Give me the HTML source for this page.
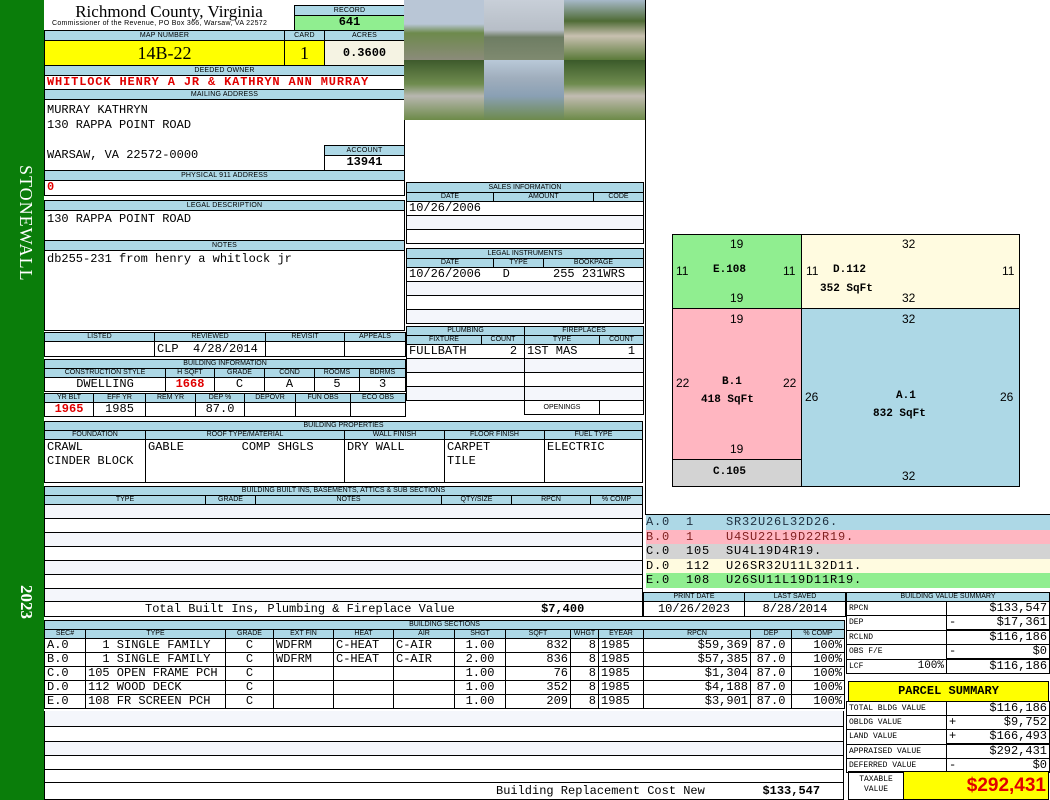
<!DOCTYPE html>
<html><head><meta charset="utf-8"><style>
*{margin:0;padding:0;box-sizing:border-box}
body{width:1050px;height:800px;position:relative;background:#fff;overflow:hidden;font-family:"Liberation Mono",monospace;font-size:12px;color:#000}
.a{position:absolute}
.b{position:absolute;border:1px solid #000}
.h{position:absolute;background:#add8e6;border:1px solid #000;font:7px/9px "Liberation Sans",sans-serif;text-align:center;letter-spacing:0.2px}
.v{position:absolute;border:1px solid #000;font:12px/13px "Liberation Mono",monospace;white-space:nowrap;overflow:hidden;padding:0 2px}
.c{text-align:center}.r{text-align:right}
.red{color:#e00000;font-weight:bold}
table{position:absolute;border-collapse:collapse;table-layout:fixed}
td{border:1px solid #000;padding:0 2px;white-space:nowrap;overflow:hidden;font:12px/13px "Liberation Mono",monospace}
tr.hd td{background:#add8e6;font:7px/8px "Liberation Sans",sans-serif;text-align:center}
tr.alt td{background:#f4f6fb}
.sk{position:absolute;font:12px "Liberation Sans",sans-serif}
.skb{position:absolute;font:bold 11px "Liberation Mono",monospace}
.lb{font-size:8px!important}
</style></head><body>
<div class="a" style="left:0;top:0;width:44px;height:800px;background:#0a7d0a"></div>
<div class="a" style="left:8px;top:165px;width:28px;height:150px;color:#fff;font:18px 'Liberation Serif',serif;writing-mode:vertical-rl;letter-spacing:1px">STONEWALL</div>
<div class="a" style="left:8px;top:585px;width:28px;height:45px;color:#fff;font:bold 17px 'Liberation Serif',serif;writing-mode:vertical-rl">2023</div>

<div class="a" style="left:44px;top:2px;width:250px;text-align:center;font:17px/19px 'Liberation Serif',serif">Richmond County, Virginia</div>
<div class="a" style="left:52px;top:19px;width:240px;font:7px/9px 'Liberation Sans',sans-serif;letter-spacing:0.3px">Commissioner of the Revenue, PO Box 366, Warsaw, VA 22572</div>
<div class="h" style="left:294px;top:5px;width:111px;height:11px">RECORD</div>
<div class="v c" style="left:294px;top:15px;width:111px;height:16px;background:#90ee90;font-weight:bold">641</div>
<div class="h" style="left:44px;top:30px;width:241px;height:11px">MAP NUMBER</div>
<div class="h" style="left:284px;top:30px;width:41px;height:11px">CARD</div>
<div class="h" style="left:324px;top:30px;width:81px;height:11px">ACRES</div>
<div class="b" style="left:44px;top:40px;width:241px;height:26px;background:#ffff00;font:18px/24px 'Liberation Serif',serif;text-align:center">14B-22</div>
<div class="b" style="left:284px;top:40px;width:41px;height:26px;background:#ffff00;font:18px/24px 'Liberation Serif',serif;text-align:center">1</div>
<div class="v c" style="left:324px;top:40px;width:81px;height:26px;background:#f5f3e3;font-weight:bold;line-height:24px">0.3600</div>
<div class="h" style="left:44px;top:65px;width:361px;height:11px">DEEDED OWNER</div>
<div class="v red" style="left:44px;top:75px;width:361px;height:15px;font-size:12px;letter-spacing:0.85px">WHITLOCK HENRY A JR &amp; KATHRYN ANN MURRAY</div>
<div class="h" style="left:44px;top:89px;width:361px;height:11px">MAILING ADDRESS</div>
<div class="b" style="left:44px;top:99px;width:361px;height:72px"></div>
<div class="a" style="left:47px;top:103px;font:12px/15px 'Liberation Mono',monospace">MURRAY KATHRYN<br>130 RAPPA POINT ROAD<br><br>WARSAW, VA 22572-0000</div>
<div class="h" style="left:324px;top:145px;width:81px;height:11px">ACCOUNT</div>
<div class="v c" style="left:324px;top:155px;width:81px;height:16px;font-weight:bold">13941</div>
<div class="h" style="left:44px;top:170px;width:361px;height:11px">PHYSICAL 911 ADDRESS</div>
<div class="v red" style="left:44px;top:180px;width:361px;height:16px">0</div>
<div class="h" style="left:44px;top:200px;width:361px;height:11px">LEGAL DESCRIPTION</div>
<div class="v" style="left:44px;top:210px;width:361px;height:31px;padding-top:2px">130 RAPPA POINT ROAD</div>
<div class="h" style="left:44px;top:240px;width:361px;height:11px">NOTES</div>
<div class="v" style="left:44px;top:250px;width:361px;height:81px;padding-top:2px">db255-231 from henry a whitlock jr</div>

<!-- photos -->
<div class="a" style="left:404px;top:0;width:241px;height:120px;display:grid;grid-template-columns:80px 80px 81px;grid-template-rows:60px 60px">
<div style="background:linear-gradient(#b9c6d6 0,#b9c6d6 40%,#6d8a4c 55%,#8b8b7a 100%)"></div>
<div style="background:linear-gradient(#c8cfd8 0,#b7bec7 50%,#6e7d63 62%,#7f8a70 100%)"></div>
<div style="background:linear-gradient(#a7b9c9 0,#4f6b35 35%,#c8c0b0 60%,#5b7a3a 100%)"></div>
<div style="background:linear-gradient(#3e5a2c 0,#6f8c4f 40%,#b8b7b0 60%,#6c8a48 100%)"></div>
<div style="background:linear-gradient(#b9c9d8 0,#a0aebd 30%,#8aa0b4 60%,#6d8a4c 100%)"></div>
<div style="background:linear-gradient(#3b5a2a 0,#6f8c4f 40%,#c2bcb2 60%,#6c8a48 100%)"></div>
</div>

<!-- sales -->
<table style="left:406px;top:182px;width:237px">
<colgroup><col style="width:87px"><col style="width:100px"><col style="width:50px"></colgroup>
<tr class="hd"><td colspan="3" style="height:10px">SALES INFORMATION</td></tr>
<tr class="hd"><td>DATE</td><td>AMOUNT</td><td>CODE</td></tr>
<tr><td colspan="3" style="height:14px">10/26/2006</td></tr>
<tr class="alt"><td colspan="3" style="height:14px"></td></tr>
<tr><td colspan="3" style="height:14px"></td></tr>
</table>
<table style="left:406px;top:248px;width:237px">
<colgroup><col style="width:87px"><col style="width:50px"><col style="width:100px"></colgroup>
<tr class="hd"><td colspan="3" style="height:10px">LEGAL INSTRUMENTS</td></tr>
<tr class="hd"><td>DATE</td><td>TYPE</td><td>BOOKPAGE</td></tr>
<tr><td colspan="3" style="height:14px">10/26/2006&nbsp;&nbsp;&nbsp;D&nbsp;&nbsp;&nbsp;&nbsp;&nbsp;&nbsp;255 231WRS</td></tr>
<tr class="alt"><td colspan="3" style="height:14px"></td></tr>
<tr><td colspan="3" style="height:14px"></td></tr>
<tr class="alt"><td colspan="3" style="height:14px"></td></tr>
</table>
<table style="left:406px;top:326px;width:237px">
<colgroup><col style="width:75px"><col style="width:43px"><col style="width:75px"><col style="width:44px"></colgroup>
<tr class="hd"><td colspan="2">PLUMBING</td><td colspan="2">FIREPLACES</td></tr>
<tr class="hd"><td>FIXTURE</td><td>COUNT</td><td>TYPE</td><td>COUNT</td></tr>
<tr><td colspan="2" style="height:14px">FULLBATH&nbsp;&nbsp;&nbsp;&nbsp;&nbsp;&nbsp;2</td><td colspan="2">1ST MAS&nbsp;&nbsp;&nbsp;&nbsp;&nbsp;&nbsp;&nbsp;1</td></tr>
<tr class="alt"><td colspan="2" style="height:14px"></td><td colspan="2"></td></tr>
<tr><td colspan="2" style="height:14px"></td><td colspan="2"></td></tr>
<tr class="alt"><td colspan="2" style="height:14px"></td><td colspan="2"></td></tr>
<tr><td colspan="2" style="border:none;border-right:1px solid #000;height:14px"></td><td style="font:7px 'Liberation Sans',sans-serif;text-align:center">OPENINGS</td><td></td></tr>
</table>

<!-- listed -->
<table style="left:44px;top:332px;width:361px">
<colgroup><col style="width:110px"><col style="width:111px"><col style="width:79px"><col style="width:61px"></colgroup>
<tr class="hd"><td>LISTED</td><td>REVIEWED</td><td>REVISIT</td><td>APPEALS</td></tr>
<tr><td style="height:15px"></td><td>CLP&nbsp;&nbsp;4/28/2014</td><td></td><td></td></tr>
</table>
<table style="left:44px;top:359px;width:361px">
<colgroup><col style="width:121px"><col style="width:49px"><col style="width:50px"><col style="width:50px"><col style="width:45px"><col style="width:46px"></colgroup>
<tr class="hd"><td colspan="6">BUILDING INFORMATION</td></tr>
<tr class="hd"><td>CONSTRUCTION STYLE</td><td>H SQFT</td><td>GRADE</td><td>COND</td><td>ROOMS</td><td>BDRMS</td></tr>
<tr style="text-align:center"><td>DWELLING</td><td class="red">1668</td><td>C</td><td>A</td><td>5</td><td>3</td></tr>
</table>
<table style="left:44px;top:393px;width:361px">
<colgroup><col style="width:49px"><col style="width:52px"><col style="width:50px"><col style="width:49px"><col style="width:51px"><col style="width:55px"><col style="width:55px"></colgroup>
<tr class="hd"><td>YR BLT</td><td>EFF YR</td><td>REM YR</td><td>DEP %</td><td>DEPOVR</td><td>FUN OBS</td><td>ECO OBS</td></tr>
<tr style="text-align:center"><td class="red" style="height:14px">1965</td><td>1985</td><td></td><td>87.0</td><td></td><td></td><td></td></tr>
</table>

<!-- building properties -->
<table style="left:44px;top:421px;width:598px">
<colgroup><col style="width:101px"><col style="width:199px"><col style="width:100px"><col style="width:100px"><col style="width:98px"></colgroup>
<tr class="hd"><td colspan="5">BUILDING PROPERTIES</td></tr>
<tr class="hd"><td>FOUNDATION</td><td>ROOF TYPE/MATERIAL</td><td>WALL FINISH</td><td>FLOOR FINISH</td><td>FUEL TYPE</td></tr>
<tr style="vertical-align:top"><td style="height:43px;line-height:14px">CRAWL<br>CINDER BLOCK</td><td style="line-height:14px">GABLE&nbsp;&nbsp;&nbsp;&nbsp;&nbsp;&nbsp;&nbsp;&nbsp;COMP SHGLS</td><td style="line-height:14px">DRY WALL</td><td style="line-height:14px">CARPET<br>TILE</td><td style="line-height:14px">ELECTRIC</td></tr>
</table>

<!-- built ins -->
<table style="left:44px;top:486px;width:598px">
<colgroup><col style="width:161px"><col style="width:50px"><col style="width:186px"><col style="width:70px"><col style="width:79px"><col style="width:52px"></colgroup>
<tr class="hd"><td colspan="6">BUILDING BUILT INS, BASEMENTS, ATTICS &amp; SUB SECTIONS</td></tr>
<tr class="hd"><td>TYPE</td><td>GRADE</td><td>NOTES</td><td>QTY/SIZE</td><td>RPCN</td><td>% COMP</td></tr>
<tr class="alt"><td colspan="6" style="height:14px"></td></tr>
<tr><td colspan="6" style="height:14px"></td></tr>
<tr class="alt"><td colspan="6" style="height:14px"></td></tr>
<tr><td colspan="6" style="height:14px"></td></tr>
<tr class="alt"><td colspan="6" style="height:14px"></td></tr>
<tr><td colspan="6" style="height:14px"></td></tr>
<tr class="alt"><td colspan="6" style="height:13px"></td></tr>
<tr><td colspan="6" style="height:15px;padding-left:100px">Total Built Ins, Plumbing &amp; Fireplace Value&nbsp;&nbsp;&nbsp;&nbsp;&nbsp;&nbsp;&nbsp;&nbsp;&nbsp;&nbsp;&nbsp;&nbsp;<b>$7,400</b></td></tr>
</table>

<!-- building sections -->
<table style="left:44px;top:620px;width:800px">
<colgroup><col style="width:41px"><col style="width:140px"><col style="width:48px"><col style="width:60px"><col style="width:60px"><col style="width:61px"><col style="width:51px"><col style="width:65px"><col style="width:28px"><col style="width:45px"><col style="width:107px"><col style="width:41px"><col style="width:53px"></colgroup>
<tr class="hd"><td colspan="13">BUILDING SECTIONS</td></tr>
<tr class="hd"><td>SEC#</td><td>TYPE</td><td>GRADE</td><td>EXT FIN</td><td>HEAT</td><td>AIR</td><td>SHGT</td><td>SQFT</td><td>WHGT</td><td>EYEAR</td><td>RPCN</td><td>DEP</td><td>% COMP</td></tr>
<tr><td>A.0</td><td>&nbsp;&nbsp;1 SINGLE FAMILY</td><td class="c">C</td><td>WDFRM</td><td>C-HEAT</td><td>C-AIR</td><td class="c">1.00</td><td class="r">832</td><td class="r">8</td><td>1985</td><td class="r">$59,369</td><td class="c">87.0</td><td class="r">100%</td></tr>
<tr><td>B.0</td><td>&nbsp;&nbsp;1 SINGLE FAMILY</td><td class="c">C</td><td>WDFRM</td><td>C-HEAT</td><td>C-AIR</td><td class="c">2.00</td><td class="r">836</td><td class="r">8</td><td>1985</td><td class="r">$57,385</td><td class="c">87.0</td><td class="r">100%</td></tr>
<tr><td>C.0</td><td>105 OPEN FRAME PCH</td><td class="c">C</td><td></td><td></td><td></td><td class="c">1.00</td><td class="r">76</td><td class="r">8</td><td>1985</td><td class="r">$1,304</td><td class="c">87.0</td><td class="r">100%</td></tr>
<tr><td>D.0</td><td>112 WOOD DECK</td><td class="c">C</td><td></td><td></td><td></td><td class="c">1.00</td><td class="r">352</td><td class="r">8</td><td>1985</td><td class="r">$4,188</td><td class="c">87.0</td><td class="r">100%</td></tr>
<tr><td>E.0</td><td>108 FR SCREEN PCH</td><td class="c">C</td><td></td><td></td><td></td><td class="c">1.00</td><td class="r">209</td><td class="r">8</td><td>1985</td><td class="r">$3,901</td><td class="c">87.0</td><td class="r">100%</td></tr>
</table>
<div class="b" style="left:44px;top:711px;width:800px;height:89px;border-top:none"></div>
<div class="a" style="left:45px;top:711px;width:798px;height:16px;border-bottom:1px solid #000;background:#f4f6fb"></div>
<div class="a" style="left:45px;top:727px;width:798px;height:15px;border-bottom:1px solid #000"></div>
<div class="a" style="left:45px;top:742px;width:798px;height:14px;border-bottom:1px solid #000;background:#f4f6fb"></div>
<div class="a" style="left:45px;top:756px;width:798px;height:14px;border-bottom:1px solid #000"></div>
<div class="a" style="left:45px;top:770px;width:798px;height:13px;border-bottom:1px solid #000"></div>
<div class="a" style="left:496px;top:785px;font:12px/13px 'Liberation Mono',monospace;white-space:pre">Building Replacement Cost New        <b>$133,547</b></div>

<!-- sketch -->
<div class="b" style="left:645px;top:0;width:405px;height:515px;border-right:none;border-top:none"></div>
<div class="b" style="left:672px;top:234px;width:130px;height:75px;background:#90ee90"></div>
<div class="b" style="left:801px;top:234px;width:219px;height:75px;background:#fffbe0"></div>
<div class="b" style="left:672px;top:308px;width:130px;height:152px;background:#ffb6c1"></div>
<div class="b" style="left:672px;top:459px;width:130px;height:28px;background:#d3d3d3"></div>
<div class="b" style="left:801px;top:308px;width:219px;height:179px;background:#add8e6"></div>
<div class="sk" style="left:730px;top:237px">19</div><div class="sk" style="left:676px;top:264px">11</div><div class="sk" style="left:783px;top:264px">11</div><div class="skb" style="left:713px;top:264px">E.108</div><div class="sk" style="left:730px;top:291px">19</div>
<div class="sk" style="left:902px;top:237px">32</div><div class="sk" style="left:806px;top:264px">11</div><div class="skb" style="left:833px;top:264px">D.112</div><div class="sk" style="left:1002px;top:264px">11</div><div class="skb" style="left:820px;top:283px">352 SqFt</div><div class="sk" style="left:902px;top:291px">32</div>
<div class="sk" style="left:730px;top:312px">19</div><div class="sk" style="left:676px;top:376px">22</div><div class="skb" style="left:722px;top:376px">B.1</div><div class="sk" style="left:783px;top:376px">22</div><div class="skb" style="left:701px;top:394px">418 SqFt</div><div class="sk" style="left:730px;top:442px">19</div>
<div class="skb" style="left:713px;top:466px">C.105</div>
<div class="sk" style="left:902px;top:312px">32</div><div class="sk" style="left:805px;top:390px">26</div><div class="skb" style="left:896px;top:390px">A.1</div><div class="sk" style="left:1000px;top:390px">26</div><div class="skb" style="left:873px;top:408px">832 SqFt</div><div class="sk" style="left:902px;top:469px">32</div>

<!-- segments -->
<div class="a" style="left:645px;top:514px;width:405px;font:12px/14.6px 'Liberation Mono',monospace;letter-spacing:0.8px;white-space:pre;border-top:1px solid #000;padding-left:1px"><div style="background:#add8e6;color:#203040">A.0  1    SR32U26L32D26.</div><div style="background:#ffb6c1;color:#802020">B.0  1    U4SU22L19D22R19.</div><div style="background:#d3d3d3">C.0  105  SU4L19D4R19.</div><div style="background:#fffbe0">D.0  112  U26SR32U11L32D11.</div><div style="background:#90ee90">E.0  108  U26SU11L19D11R19.</div></div>

<table style="left:643px;top:592px;width:202px">
<colgroup><col style="width:101px"><col style="width:101px"></colgroup>
<tr class="hd"><td>PRINT DATE</td><td>LAST SAVED</td></tr>
<tr class="c"><td style="height:15px">10/26/2023</td><td>8/28/2014</td></tr>
</table>

<table style="left:846px;top:592px;width:203px">
<colgroup><col style="width:100px"><col style="width:103px"></colgroup>
<tr class="hd"><td colspan="2">BUILDING VALUE SUMMARY</td></tr>
<tr><td class="lb" style="height:14px">RPCN</td><td class="r">$133,547</td></tr>
<tr><td class="lb" style="height:14px">DEP</td><td class="r" style="border-bottom:2px solid #000"><span style="float:left">-</span>$17,361</td></tr>
<tr><td class="lb" style="height:14px">RCLND</td><td class="r">$116,186</td></tr>
<tr><td class="lb" style="height:14px">OBS F/E</td><td class="r" style="border-bottom:2px solid #000"><span style="float:left">-</span>$0</td></tr>
<tr><td class="lb" style="height:14px">LCF<span style="float:right;font-size:11px">100%</span></td><td class="r">$116,186</td></tr>
</table>

<div class="b" style="left:848px;top:681px;width:201px;height:21px;background:#ffff00;font:bold 12px/19px 'Liberation Mono',monospace;text-align:center">PARCEL SUMMARY</div>
<table style="left:846px;top:701px;width:203px">
<colgroup><col style="width:100px"><col style="width:103px"></colgroup>
<tr><td class="lb" style="height:14px">TOTAL BLDG VALUE</td><td class="r">$116,186</td></tr>
<tr><td class="lb" style="height:14px">OBLDG VALUE</td><td class="r"><span style="float:left">+</span>$9,752</td></tr>
<tr><td class="lb" style="height:14px">LAND VALUE</td><td class="r" style="border-bottom:2px solid #000"><span style="float:left">+</span>$166,493</td></tr>
<tr><td class="lb" style="height:14px">APPRAISED VALUE</td><td class="r">$292,431</td></tr>
<tr><td class="lb" style="height:14px">DEFERRED VALUE</td><td class="r"><span style="float:left">-</span>$0</td></tr>
</table>
<div class="b" style="left:848px;top:771px;width:56px;height:29px;font:8px/10px 'Liberation Mono',monospace;text-align:center;padding-top:3px">TAXABLE<br>VALUE</div>
<div class="b" style="left:903px;top:771px;width:146px;height:29px;background:#ffff00;color:#e00000;font:bold 19px/27px 'Liberation Sans',sans-serif;text-align:right;padding-right:2px">$292,431</div>
</body></html>
